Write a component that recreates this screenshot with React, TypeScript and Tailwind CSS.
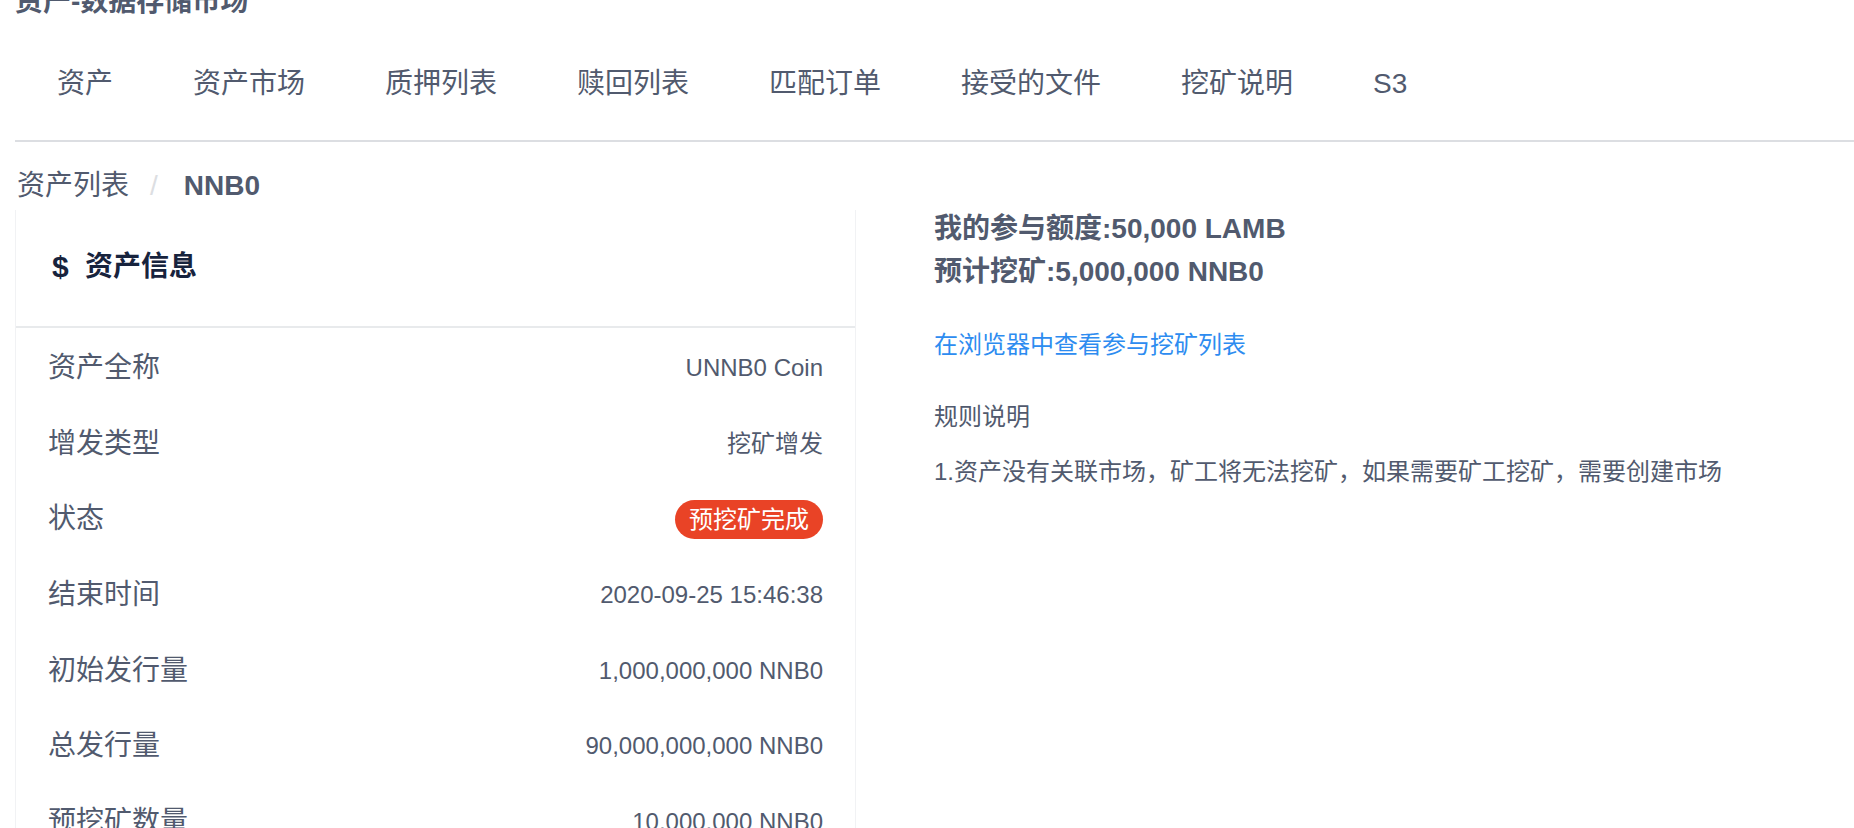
import React from "react";

const tabs = ["资产", "资产市场", "质押列表", "赎回列表", "匹配订单", "接受的文件", "挖矿说明", "S3"];

const rows: { label: string; value: string; badge?: boolean }[] = [
  { label: "资产全称", value: "UNNB0 Coin" },
  { label: "增发类型", value: "挖矿增发" },
  { label: "状态", value: "预挖矿完成", badge: true },
  { label: "结束时间", value: "2020-09-25 15:46:38" },
  { label: "初始发行量", value: "1,000,000,000 NNB0" },
  { label: "总发行量", value: "90,000,000,000 NNB0" },
  { label: "预挖矿数量", value: "10,000,000 NNB0" },
];

export default function App() {
  return (
    <div className="h-[828px] overflow-hidden bg-white font-['Liberation_Sans','Noto_Sans_CJK_SC',sans-serif] text-[#515a6e]">
      <div className="pl-[15px] pt-px">
        <div className="-mt-[19px] h-[40px] text-[28px] font-bold leading-[40px] whitespace-nowrap">资产-数据存储市场</div>
        <div className="flex h-[120px] border-b-2 border-[#dcdee2] pl-[2px] pt-[42px]">
          {tabs.map((t) => (
            <div key={t} className="px-[40px] text-[28px] leading-[40px] whitespace-nowrap">
              {t}
            </div>
          ))}
        </div>
        <div className="mt-[24px] flex h-[40px] items-center pl-[2px] text-[28px] leading-[40px]">
          <span className="text-[#515a6e]">资产列表</span>
          <span className="ml-[21px] mr-[26px] text-[#dcdee2]">/</span>
          <span className="font-bold text-[#515a6e]">NNB0</span>
        </div>
        <div className="mt-[4px] flex items-start">
          <div className="w-[841px] shrink-0 border-x border-[#f1f2f4]">
            <div className="flex h-[118px] items-center border-b-2 border-[#e8eaec] pb-[2px] pl-[36px] text-[#17233d]">
              <span className="w-[17px] text-[30px] font-bold leading-[40px]">$</span>
              <span className="ml-[16px] text-[28px] font-bold leading-[40px]">资产信息</span>
            </div>
            <div className="pt-[2px]">
              {rows.map((r) => (
                <div key={r.label} className="flex h-[75.7px] items-center justify-between px-[32px]">
                  <span className="text-[28px] leading-[40px]">{r.label}</span>
                  {r.badge ? (
                    <span className="h-[39px] rounded-full bg-[#e94326] px-[14px] text-[24px] leading-[39px] text-white">
                      {r.value}
                    </span>
                  ) : (
                    <span className="text-[24px] leading-[36px]">{r.value}</span>
                  )}
                </div>
              ))}
            </div>
          </div>
          <div className="ml-[78px] -mt-[3px] flex flex-col">
            <div className="text-[28px] font-bold leading-[43px] whitespace-nowrap">我的参与额度:50,000 LAMB</div>
            <div className="text-[28px] font-bold leading-[43px] whitespace-nowrap">预计挖矿:5,000,000 NNB0</div>
            <div className="mt-[34px] text-[24px] leading-[36px] text-[#2d8cf0] whitespace-nowrap">在浏览器中查看参与挖矿列表</div>
            <div className="mt-[36px] text-[24px] leading-[36px] whitespace-nowrap">规则说明</div>
            <div className="mt-[19px] text-[24px] leading-[36px] whitespace-nowrap">
              1.资产没有关联市场，矿工将无法挖矿，如果需要矿工挖矿，需要创建市场
            </div>
          </div>
        </div>
      </div>
    </div>
  );
}
